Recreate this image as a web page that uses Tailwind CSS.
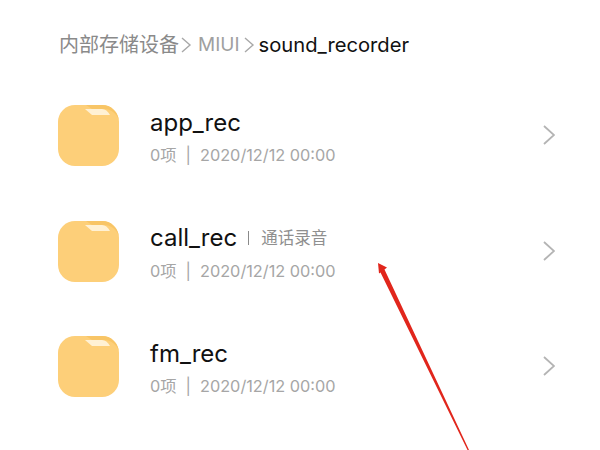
<!DOCTYPE html>
<html lang="en">
<head>
  <meta charset="UTF-8">
  <title>sound_recorder</title>
  <script src="https://cdn.jsdelivr.net/npm/@tailwindcss/browser@4"></script>
</head>
<body class="bg-white">
  <div class="relative w-[600px] h-[450px] overflow-hidden bg-white font-['Inter','Noto_Sans_CJK_SC',sans-serif]">

    <!-- breadcrumb -->
    <div class="flex items-center h-[30px] mt-[30px] ml-[59px] text-[20px] text-[#8a8a8a]">
      <span class="w-[120px]">内部存储设备</span>
      <svg class="w-[14px] h-[18px] mr-[5px]" viewBox="0 0 14 18" fill="none" stroke="#a8a8a8" stroke-width="1.4"><path d="M3 2l8 7-8 7"/></svg>
      <span class="text-[#a0a0a0] text-[19px]">MIUI</span>
      <svg class="w-[14px] h-[18px] ml-[2px] mr-[3px]" viewBox="0 0 14 18" fill="none" stroke="#a8a8a8" stroke-width="1.4"><path d="M3 2l8 7-8 7"/></svg>
      <span class="text-[#111] text-[20.200px]">sound_recorder</span>
    </div>

    <!-- folder list -->
    <div class="flex flex-col gap-[54.500px] mt-[45px] ml-[58px] w-[500px]">

      <div class="flex items-center h-[61px]">
        <svg class="w-[61px] h-[61px] shrink-0" viewBox="0 0 61 61"><rect width="61" height="61" rx="17" fill="#fdcf79"/><path d="M28 0h16c9 0 15 6 17 15C58 8 53 4 46 4H34z" fill="#f8c566"/><path d="M27 4h17c3 0 6 2 8 6H34z" fill="#fff1d4"/></svg>
        <div class="ml-[31px] flex-1">
          <div class="h-[33px] -mt-[1px] flex items-center text-[24px] leading-none text-[#111]">app_rec</div>
          <div class="mt-[8px] flex items-center text-[16.300px] leading-none text-[#a6a6a6]">0项<span class="mx-[9px]">|</span>2020/12/12 00:00</div>
        </div>
        <svg class="w-[12px] h-[22px] -mt-[1px] mr-[3px]" viewBox="0 0 12 22" fill="none" stroke="#b4b4b4" stroke-width="1.8"><path d="M1 2l10 9-10 9"/></svg>
      </div>

      <div class="flex items-center h-[61px]">
        <svg class="w-[61px] h-[61px] shrink-0" viewBox="0 0 61 61"><rect width="61" height="61" rx="17" fill="#fdcf79"/><path d="M28 0h16c9 0 15 6 17 15C58 8 53 4 46 4H34z" fill="#f8c566"/><path d="M27 4h17c3 0 6 2 8 6H34z" fill="#fff1d4"/></svg>
        <div class="ml-[31px] flex-1">
          <div class="h-[33px] -mt-[1px] flex items-center text-[24px] leading-none text-[#111]">call_rec<span class="ml-[11px] mr-[12px] w-[1px] h-[14px] bg-[#8a8a8a]"></span><span class="text-[16.500px] text-[#8f8f8f]">通话录音</span></div>
          <div class="mt-[8px] flex items-center text-[16.300px] leading-none text-[#a6a6a6]">0项<span class="mx-[9px]">|</span>2020/12/12 00:00</div>
        </div>
        <svg class="w-[12px] h-[22px] -mt-[1px] mr-[3px]" viewBox="0 0 12 22" fill="none" stroke="#b4b4b4" stroke-width="1.8"><path d="M1 2l10 9-10 9"/></svg>
      </div>

      <div class="flex items-center h-[61px]">
        <svg class="w-[61px] h-[61px] shrink-0" viewBox="0 0 61 61"><rect width="61" height="61" rx="17" fill="#fdcf79"/><path d="M28 0h16c9 0 15 6 17 15C58 8 53 4 46 4H34z" fill="#f8c566"/><path d="M27 4h17c3 0 6 2 8 6H34z" fill="#fff1d4"/></svg>
        <div class="ml-[31px] flex-1">
          <div class="h-[33px] -mt-[1px] flex items-center text-[24px] leading-none text-[#111]">fm_rec</div>
          <div class="mt-[8px] flex items-center text-[16.300px] leading-none text-[#a6a6a6]">0项<span class="mx-[9px]">|</span>2020/12/12 00:00</div>
        </div>
        <svg class="w-[12px] h-[22px] -mt-[1px] mr-[3px]" viewBox="0 0 12 22" fill="none" stroke="#b4b4b4" stroke-width="1.8"><path d="M1 2l10 9-10 9"/></svg>
      </div>
    </div>

    <!-- red annotation arrow -->
    <svg class="absolute left-0 top-0" width="600" height="450" viewBox="0 0 600 450"><path d="M378 263l9 4.500-2.500 2 84.500 180.500h-1.500L380.500 272.500l-1.500 1z" fill="#e1261c"/></svg>
  </div>
</body>
</html>
